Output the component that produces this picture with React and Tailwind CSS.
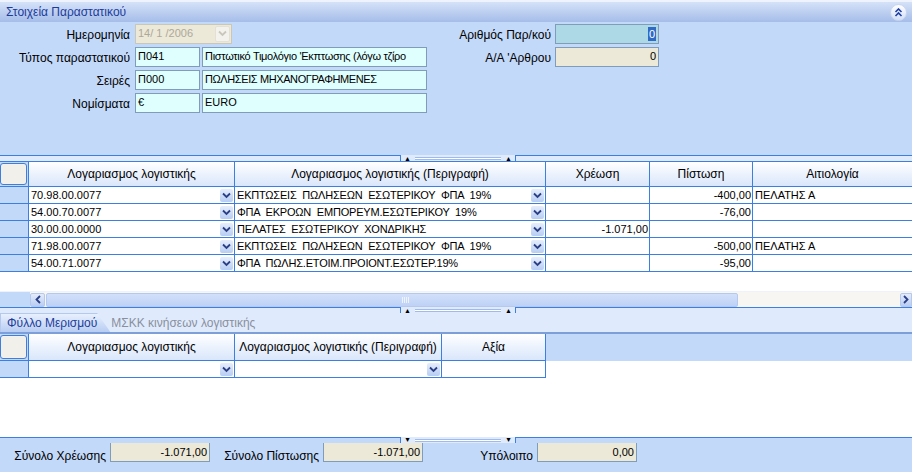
import React from 'react';

const rows = [
    { code: '70.98.00.0077', desc: 'ΕΚΠΤΩΣΕΙΣ  ΠΩΛΗΣΕΩΝ  ΕΣΩΤΕΡΙΚΟΥ  ΦΠΑ  19%', debit: '', credit: '-400,00', reason: 'ΠΕΛΑΤΗΣ Α' },
    { code: '54.00.70.0077', desc: 'ΦΠΑ  ΕΚΡΟΩΝ  ΕΜΠΟΡΕΥΜ.ΕΣΩΤΕΡΙΚΟΥ  19%', debit: '', credit: '-76,00', reason: '' },
    { code: '30.00.00.0000', desc: 'ΠΕΛΑΤΕΣ  ΕΣΩΤΕΡΙΚΟΥ  ΧΟΝΔΡΙΚΗΣ', debit: '-1.071,00', credit: '', reason: '' },
    { code: '71.98.00.0077', desc: 'ΕΚΠΤΩΣΕΙΣ  ΠΩΛΗΣΕΩΝ  ΕΣΩΤΕΡΙΚΟΥ  ΦΠΑ  19%', debit: '', credit: '-500,00', reason: 'ΠΕΛΑΤΗΣ Α' },
    { code: '54.00.71.0077', desc: 'ΦΠΑ  ΠΩΛΗΣ.ΕΤΟΙΜ.ΠΡΟΙΟΝΤ.ΕΣΩΤΕΡ.19%', debit: '', credit: '-95,00', reason: '' },
];

const DropBtn = () => (
    <div className="w-[13px] h-[13px] shrink-0 rounded-[2px] bg-gradient-to-b from-[#e6eefc] to-[#b7cdf2] flex items-center justify-center mr-[1px]">
        <svg width="9" height="7" viewBox="0 0 9 7">
            <path d="M1 1.5 L4.5 5 L8 1.5" fill="none" stroke="#2a3f86" strokeWidth="1.8" />
        </svg>
    </div>
);

const Splitter = ({ dir = 'up', top = 'bg-[#dfebfc]' }) => (
    <div className={`relative h-[6px] shrink-0 border-t border-[#3d7fe0] ${top}`}>
        <div className="absolute left-[400px] top-[-1px] w-[116px] h-[6px] bg-[#dfebfc] border-x border-[#3d7fe0] flex items-center">
            <span className={`ml-[3px] text-[7px] leading-none ${dir === 'up' ? '' : 'rotate-180'}`}>▲</span>
            <div className="flex-1 mx-[4px] h-[3px] border-y border-[#9fbbe9] bg-white"></div>
            <span className={`mr-[3px] text-[7px] leading-none ${dir === 'up' ? '' : 'rotate-180'}`}>▲</span>
        </div>
    </div>
);

const Input = ({ w, bg = 'bg-[#dfffff]', right, children, className = '' }) => (
    <div className={`h-[20px] border border-[#7f9db9] ${bg} ${w} px-[2px] flex items-center whitespace-nowrap overflow-hidden ${right ? 'justify-end' : ''} ${className}`}>
        {children}
    </div>
);

const HeadCell = ({ children, className = '' }) => (
    <div className={`h-[26px] border-r border-t border-b border-[#3d7fe0] bg-gradient-to-b from-white to-[#d9e6fb] flex items-center justify-center text-[12px] ${className}`}>
        {children}
    </div>
);

export default function App() {
    return (
        <div className="w-[912px] h-[472px] overflow-hidden flex flex-col font-['Liberation_Sans',Arial,sans-serif] text-black bg-white">
            {/* Header bar */}
            <div className="h-[22px] shrink-0 border-t-2 border-[#eef3fd] bg-gradient-to-b from-[#d5e2f8] to-[#a6bde9] flex items-center justify-between pl-[6px] pr-[5px]">
                <span className="text-[12px] text-[#1d3c9a]">Στοιχεία Παραστατικού</span>
                <div className="w-[17px] h-[17px] rounded-full bg-gradient-to-b from-white to-[#d3e0f7] border border-[#c8d6ef] flex items-center justify-center">
                    <svg width="9" height="9" viewBox="0 0 9 9">
                        <path d="M1.5 4 L4.5 1 L7.5 4 M1.5 8 L4.5 5 L7.5 8" fill="none" stroke="#1f3fa5" strokeWidth="1.6" />
                    </svg>
                </div>
            </div>

            {/* Form */}
            <div className="h-[133px] shrink-0 bg-[#c3d9f9] flex">
                <div className="w-[439px] flex flex-col gap-[2px] pt-[1px]">
                    <div className="flex items-center">
                        <span className="w-[131px] pr-[1px] text-right text-[12px] pt-[3px]">Ημερομηνία</span>
                        <div className="ml-[4px] w-[97px] h-[20px] border border-[#c9c7ba] bg-[#ece9d8] flex items-center pl-[2px] text-[11px] text-[#aca899]">
                            <span className="flex-1">14/ 1 /2006</span>
                            <div className="w-[15px] h-[16px] mr-[1px] rounded-[2px] bg-[#f3f2ec] border border-[#e3e1d6] flex items-center justify-center">
                                <svg width="9" height="7" viewBox="0 0 9 7">
                                    <path d="M1 1.5 L4.5 5 L8 1.5" fill="none" stroke="#c9c7bb" strokeWidth="1.8" />
                                </svg>
                            </div>
                        </div>
                    </div>
                    <div className="flex items-center">
                        <span className="w-[131px] pr-[1px] text-right text-[12px] pt-[3px]">Τύπος παραστατικού</span>
                        <Input w="ml-[4px] w-[65px] text-[11px]">Π041</Input>
                        <Input w="ml-[2px] w-[225px] text-[11px] tracking-[-0.3px]">Πιστωτικό Τιμολόγιο 'Εκπτωσης (λόγω τζίρο</Input>
                    </div>
                    <div className="flex items-center">
                        <span className="w-[131px] pr-[1px] text-right text-[12px] pt-[3px]">Σειρές</span>
                        <Input w="ml-[4px] w-[65px] text-[11px]">Π000</Input>
                        <Input w="ml-[2px] w-[225px] text-[11px] tracking-[-0.4px]">ΠΩΛΗΣΕΙΣ ΜΗΧΑΝΟΓΡΑΦΗΜΕΝΕΣ</Input>
                    </div>
                    <div className="flex items-center">
                        <span className="w-[131px] pr-[1px] text-right text-[12px] pt-[3px]">Νομίσματα</span>
                        <Input w="ml-[4px] w-[65px] text-[11px]">€</Input>
                        <Input w="ml-[2px] w-[225px] text-[11px]">EURO</Input>
                    </div>
                </div>
                <div className="flex flex-col gap-[2px] pt-[1px]">
                    <div className="flex items-center">
                        <span className="w-[112px] text-right text-[12px] pt-[3px]">Αριθμός Παρ/κού</span>
                        <Input w="ml-[4px] w-[104px] text-[11px]" bg="bg-[#add8e6]" right>
                            <span className="bg-[#316ac5] text-white leading-[14px] px-[1px]">0</span>
                        </Input>
                    </div>
                    <div className="flex items-center">
                        <span className="w-[112px] text-right text-[12px] pt-[3px]">Α/Α 'Αρθρου</span>
                        <Input w="ml-[4px] w-[104px] text-[11px]" bg="bg-[#ece9d8]" right>0</Input>
                    </div>
                </div>
            </div>

            <Splitter dir="up" />

            {/* Grid 1 */}
            <div className="h-[146px] shrink-0 bg-white flex flex-col">
                <div className="grid grid-cols-[28px_207px_311px_104px_103px_1fr]">
                    <div className="h-[26px] border-t border-b border-[#3d7fe0] bg-[#c3d9f9] pr-[1px] py-[1px]">
                        <div className="h-full rounded-[3px] border border-[#3d7fe0] bg-[#f1f0ea]"></div>
                    </div>
                    <HeadCell className="border-l">Λογαριασμος λογιστικής</HeadCell>
                    <HeadCell>Λογαριασμος λογιστικής (Περιγραφή)</HeadCell>
                    <HeadCell>Χρέωση</HeadCell>
                    <HeadCell>Πίστωση</HeadCell>
                    <HeadCell className="border-r-0">Αιτιολογία</HeadCell>
                    {rows.map((r, i) => (
                        <React.Fragment key={i}>
                            <div className="h-[17px] bg-[#c3d9f9] border-b border-[#3d7fe0]"></div>
                            <div className="h-[17px] border-l border-r border-b border-[#3d7fe0] flex items-center pl-[2px] text-[11px]">
                                <span className="flex-1">{r.code}</span>
                                <DropBtn />
                            </div>
                            <div className="h-[17px] border-r border-b border-[#3d7fe0] flex items-center pl-[2px] text-[11px] tracking-[-0.2px] whitespace-pre">
                                <span className="flex-1 overflow-hidden">{r.desc}</span>
                                <DropBtn />
                            </div>
                            <div className="h-[17px] border-r border-b border-[#3d7fe0] flex items-center justify-end pr-[1px] text-[11px]">{r.debit}</div>
                            <div className="h-[17px] border-r border-b border-[#3d7fe0] flex items-center justify-end pr-[1px] text-[11px]">{r.credit}</div>
                            <div className="h-[17px] border-b border-[#3d7fe0] flex items-center pl-[2px] text-[11px]">{r.reason}</div>
                        </React.Fragment>
                    ))}
                </div>
                <div className="flex-1"></div>
                <div className="h-[16px] flex items-center bg-[#f7f6f2] border-t border-[#eef2fa]">
                    <div className="w-[30px] h-full bg-[#c3d9f9]"></div>
                    <div className="w-[15px] h-[14px] rounded-[2px] border border-[#b5c9ee] bg-gradient-to-b from-[#e4ecfb] to-[#b9cdf2] flex items-center justify-center">
                        <svg width="6" height="9" viewBox="0 0 6 9">
                            <path d="M5 1 L1.5 4.5 L5 8" fill="none" stroke="#2a3f86" strokeWidth="1.8" />
                        </svg>
                    </div>
                    <div className="ml-[1px] w-[692px] h-[14px] rounded-[2px] border border-[#b5c9ee] bg-gradient-to-b from-[#d2e0fa] to-[#bed2f6] flex items-center justify-center">
                        <div className="flex gap-[1px] ml-[26px]">
                            <div className="w-[1px] h-[6px] bg-[#eef3fd]"></div>
                            <div className="w-[1px] h-[6px] bg-[#eef3fd]"></div>
                            <div className="w-[1px] h-[6px] bg-[#eef3fd]"></div>
                            <div className="w-[1px] h-[6px] bg-[#eef3fd]"></div>
                        </div>
                    </div>
                    <div className="flex-1"></div>
                    <div className="w-[12px] h-[14px] rounded-l-[2px] border border-[#b5c9ee] bg-gradient-to-b from-[#e4ecfb] to-[#b9cdf2] flex items-center justify-center">
                        <svg width="6" height="9" viewBox="0 0 6 9">
                            <path d="M1 1 L4.5 4.5 L1 8" fill="none" stroke="#2a3f86" strokeWidth="1.8" />
                        </svg>
                    </div>
                </div>
            </div>

            <Splitter dir="up" />

            {/* Tabs */}
            <div className="h-[21px] shrink-0 bg-[#dfebfc] border-b-2 border-[#7d9fd9] flex items-end relative">
                <div className="h-[19px] pl-[6px] pr-[13px] bg-gradient-to-b from-[#e8f0fd] to-[#b8cdf2] border-t border-l border-[#b5c9ee] text-[12px] text-[#1d3c9a] flex items-center [clip-path:polygon(0_0,88%_0,100%_100%,0_100%)]">
                    Φύλλο Μερισμού
                </div>
                <div className="h-[19px] pl-[1px] text-[12px] text-[#8a8f9c] flex items-center">ΜΣΚΚ κινήσεων λογιστικής</div>
            </div>

            {/* Grid 2 */}
            <div className="flex-1 bg-white flex flex-col">
                <div className="flex">
                    <div className="grid grid-cols-[28px_207px_207px_104px]">
                        <div className="h-[27px] border-b border-[#3d7fe0] bg-[#c3d9f9] pr-[1px] py-[1px]">
                            <div className="h-full rounded-[3px] border border-[#3d7fe0] bg-[#f1f0ea]"></div>
                        </div>
                        <div className="h-[27px] border-l border-r border-b border-[#3d7fe0] bg-gradient-to-b from-white to-[#d9e6fb] flex items-center justify-center text-[12px]">Λογαριασμος λογιστικής</div>
                        <div className="h-[27px] border-r border-b border-[#3d7fe0] bg-gradient-to-b from-white to-[#d9e6fb] flex items-center justify-center text-[12px]">Λογαριασμος λογιστικής (Περιγραφή)</div>
                        <div className="h-[27px] border-r border-b border-[#3d7fe0] bg-gradient-to-b from-white to-[#d9e6fb] flex items-center justify-center text-[12px]">Αξία</div>
                        <div className="h-[17px] bg-[#c3d9f9] border-b border-[#3d7fe0]"></div>
                        <div className="h-[17px] border-l border-r border-b border-[#3d7fe0] flex items-center justify-end">
                            <DropBtn />
                        </div>
                        <div className="h-[17px] border-r border-b border-[#3d7fe0] flex items-center justify-end">
                            <DropBtn />
                        </div>
                        <div className="h-[17px] border-r border-b border-[#3d7fe0]"></div>
                    </div>
                    <div className="flex-1 h-[27px] bg-[#c3d9f9]"></div>
                </div>
            </div>

            <Splitter dir="down" top="bg-[#c3d9f9]" />

            {/* Footer */}
            <div className="h-[29px] shrink-0 bg-[#c3d9f9] flex items-start text-[12px]">
                <span className="w-[106px] text-right pt-[4px] whitespace-nowrap">Σύνολο Χρέωσης</span>
                <Input w="ml-[4px] w-[100px] text-[11px]" bg="bg-[#ece9d8]" right className="-mt-[1px]">-1.071,00</Input>
                <span className="w-[109px] text-right pt-[4px] whitespace-nowrap">Σύνολο Πίστωσης</span>
                <Input w="ml-[4px] w-[100px] text-[11px]" bg="bg-[#ece9d8]" right className="-mt-[1px]">-1.071,00</Input>
                <span className="w-[110px] text-right pt-[4px] whitespace-nowrap">Υπόλοιπο</span>
                <Input w="ml-[4px] w-[100px] text-[11px]" bg="bg-[#ece9d8]" right className="-mt-[1px]">0,00</Input>
            </div>
        </div>
    );
}
